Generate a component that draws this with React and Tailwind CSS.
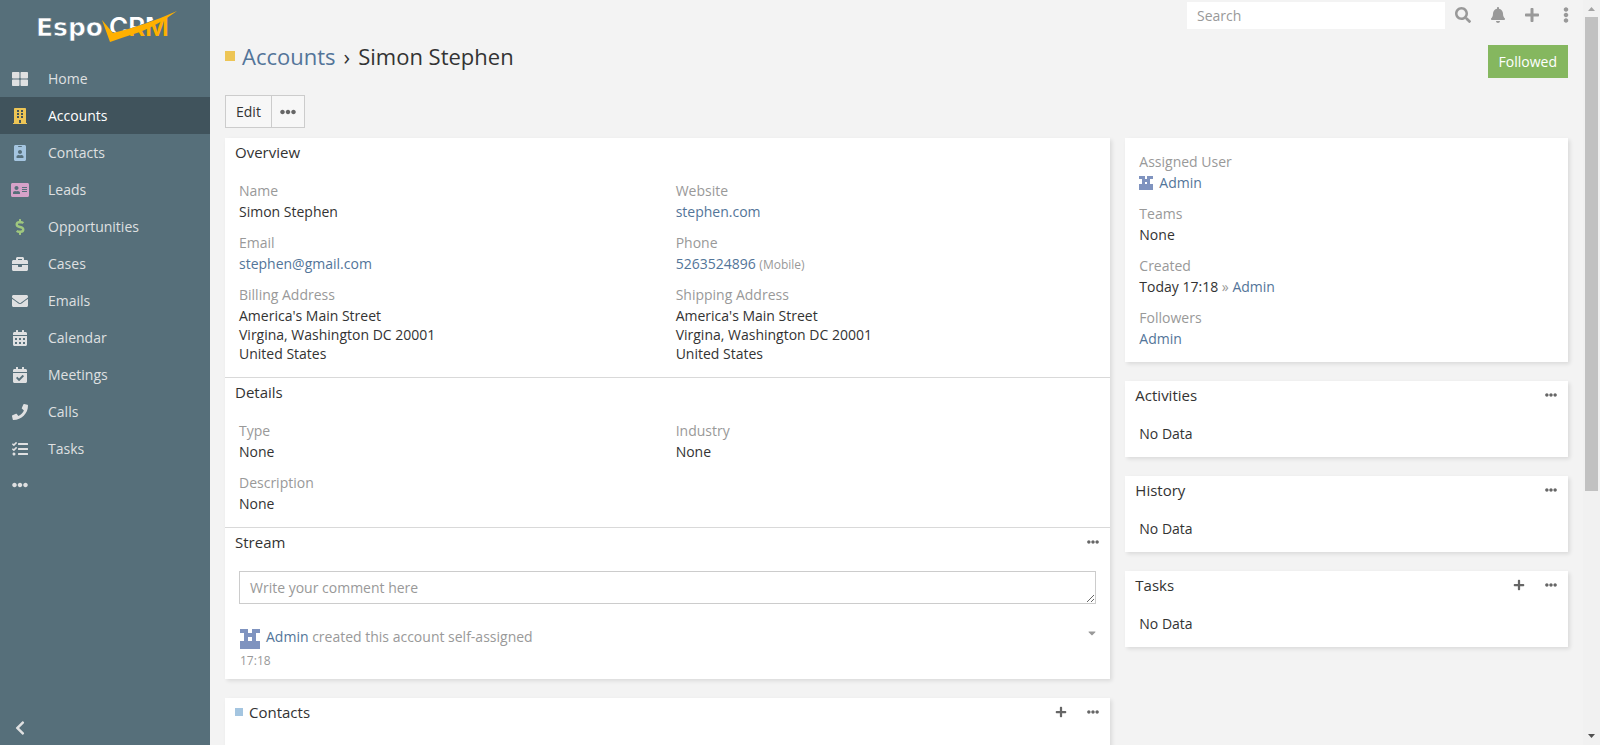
import React from "react";
import {
  FaThLarge,
  FaBuilding,
  FaIdBadge,
  FaAddressCard,
  FaDollarSign,
  FaBriefcase,
  FaEnvelope,
  FaCalendarAlt,
  FaCalendarCheck,
  FaPhone,
  FaTasks,
  FaEllipsisH,
  FaEllipsisV,
  FaChevronLeft,
  FaSearch,
  FaBell,
  FaPlus,
  FaCaretDown,
} from "react-icons/fa";

const NAV = [
  { label: "Home", Icon: FaThLarge },
  { label: "Accounts", Icon: FaBuilding, color: "text-[#edc555]", active: true },
  { label: "Contacts", Icon: FaIdBadge, color: "text-[#a4c5e0]" },
  { label: "Leads", Icon: FaAddressCard, color: "text-[#d6a2c9]" },
  { label: "Opportunities", Icon: FaDollarSign, color: "text-[#9fc77e]" },
  { label: "Cases", Icon: FaBriefcase },
  { label: "Emails", Icon: FaEnvelope },
  { label: "Calendar", Icon: FaCalendarAlt },
  { label: "Meetings", Icon: FaCalendarCheck },
  { label: "Calls", Icon: FaPhone },
  { label: "Tasks", Icon: FaTasks },
];

const ADDRESS = ["America's Main Street", "Virgina, Washington DC 20001", "United States"];

function Logo() {
  return (
    <svg viewBox="0 0 150 45" className="h-[45px] w-[150px]" role="img" aria-label="EspoCRM">
      <defs>
        <clipPath id="above">
          <path d="M76 0 H150 V4 Q116 19 86 28 L80 26 Z" />
        </clipPath>
        <clipPath id="below">
          <path d="M150 6 Q110 21 81 34 V45 H150 Z" />
        </clipPath>
      </defs>
      <text
        x="6"
        y="31"
        fill="#fff"
        stroke="#566f7a"
        strokeWidth="0.6"
        fontFamily="DejaVu Sans"
        fontWeight="700"
        fontSize="25"
      >
        Espo
      </text>
      <g fontFamily="Inter" fontWeight="600" fontSize="26">
        <text x="79" y="31" fill="#fff" clipPath="url(#above)">
          CRM
        </text>
        <text x="79" y="31" fill="#ffb000" clipPath="url(#below)">
          CRM
        </text>
      </g>
      <path d="M72 15 L83 28 Q116 20 147 6 Q128 20 110 27 Q94 32 80 37 Z" fill="#ffb000" />
    </svg>
  );
}

function Avatar({ className }) {
  return (
    <svg viewBox="0 0 5 5" className={className} shapeRendering="crispEdges" aria-hidden="true">
      <path d="M0 0H2V1H3V0H5V1H4V3H5V5H0V3H1V1H0Z M2 2V3H3V2Z" fill="#7f93bf" fillRule="evenodd" />
    </svg>
  );
}

function Link({ children }) {
  return (
    <a href="#" className="text-[#537599]">
      {children}
    </a>
  );
}

function Field({ label, children }) {
  return (
    <div>
      <dt className="mb-0.5 text-[#999]">{label}</dt>
      <dd>{children}</dd>
    </div>
  );
}

function PanelHeader({ title, swatch, add, menu }) {
  return (
    <div className="flex h-7 items-center px-2.5">
      {swatch && <span className="mr-1.5 size-2 bg-[#a4c5e0]" />}
      <h4 className="flex-1 text-[15px]">{title}</h4>
      {add && (
        <button type="button" aria-label={`Create in ${title}`} className="mr-5 text-[#666]">
          <FaPlus className="size-3" />
        </button>
      )}
      {menu && (
        <button type="button" aria-label={`${title} menu`} className="mr-px text-[#666]">
          <FaEllipsisH className="size-3" />
        </button>
      )}
    </div>
  );
}

function Card({ children }) {
  return <section className="bg-white shadow-[2px_2px_4px_rgba(0,0,0,0.1)]">{children}</section>;
}

function EmptyCard({ title, add }) {
  return (
    <Card>
      <PanelHeader title={title} add={add} menu />
      <p className="px-3.5 pt-[15px] pb-3.5">No Data</p>
    </Card>
  );
}

function Sidebar() {
  return (
    <aside className="flex w-[210px] shrink-0 flex-col bg-[#566f7a] text-[#dfe0e1]">
      <a href="#" className="flex h-[60px] justify-center pt-[5px]">
        <Logo />
      </a>
      <nav>
        <ul>
          {NAV.map(({ label, Icon, color, active }) => (
            <li key={label}>
              <a
                href="#"
                className={`flex h-[37px] items-center gap-[19px] pl-[11px] ${active ? "bg-[#40535c] text-white" : ""}`}
              >
                <Icon className={`h-4 w-[18px] ${color || ""}`} />
                {label}
              </a>
            </li>
          ))}
        </ul>
        <button type="button" aria-label="More" className="flex h-9 items-center pl-[11px]">
          <FaEllipsisH className="h-4 w-[18px]" />
        </button>
      </nav>
      <button type="button" aria-label="Collapse menu" className="mt-auto flex h-[34px] items-center pl-[11px]">
        <FaChevronLeft className="h-4 w-[18px]" />
      </button>
    </aside>
  );
}

function TopBar() {
  return (
    <div className="flex h-[30px] items-center justify-end text-[#999]">
      <input
        type="search"
        aria-label="Search"
        placeholder="Search"
        className="h-[27px] w-[258px] bg-white px-2.5 text-[#333] outline-none placeholder:text-[#999]"
      />
      <button type="button" aria-label="Run search" className="ml-2.5">
        <FaSearch className="size-4" />
      </button>
      <button type="button" aria-label="Notifications" className="ml-[19px]">
        <FaBell className="size-4" />
      </button>
      <button type="button" aria-label="Quick create" className="ml-[18px]">
        <FaPlus className="size-4" />
      </button>
      <button type="button" aria-label="Menu" className="-mr-1.5 ml-[18px]">
        <FaEllipsisV className="size-4" />
      </button>
    </div>
  );
}

function Scrollbar() {
  return (
    <div className="flex w-[17px] shrink-0 flex-col bg-[#f1f1f1]" aria-hidden="true">
      <svg viewBox="0 0 17 17" className="size-[17px]">
        <path d="M5 11L8.500 7L12 11Z" fill="#a3a3a3" />
      </svg>
      <div className="flex-1 px-0.5">
        <div className="h-2/3 bg-[#c1c1c1]" />
      </div>
      <svg viewBox="0 0 17 17" className="size-[17px]">
        <path d="M5 6L8.500 10L12 6Z" fill="#505050" />
      </svg>
    </div>
  );
}

export default function App() {
  return (
    <div className="flex h-screen overflow-hidden bg-[#f3f3f3] font-['Open_Sans',sans-serif] text-[14px] leading-[19px] text-[#333]">
      <Sidebar />
      <main className="min-w-0 flex-1 px-[15px]">
        <TopBar />
        <header className="mt-[15px] mb-[17px] flex h-[33px] items-start justify-between">
          <h3 className="flex items-center text-[22px] leading-[22px]">
            <span className="mr-[7px] size-2.5 bg-[#edc555]" />
            <Link>Accounts</Link>
            <span className="mx-2">›</span>
            <span>Simon Stephen</span>
          </h3>
          <button type="button" className="h-[33px] bg-[#85b75f] px-[11px] text-white">
            Followed
          </button>
        </header>
        <div className="mb-2.5 flex h-[33px]">
          <button type="button" className="border border-[#ccc] bg-[#f7f7f7] px-2.5">
            Edit
          </button>
          <button
            type="button"
            aria-label="More actions"
            className="-ml-px border border-[#ccc] bg-[#f7f7f7] px-2 text-[#666]"
          >
            <FaEllipsisH className="size-4" />
          </button>
        </div>
        <div className="grid grid-cols-[2fr_1fr] items-start gap-[15px]">
          <div className="space-y-[19px]">
            <Card>
              <PanelHeader title="Overview" />
              <dl className="grid grid-cols-2 gap-x-4 gap-y-3 px-3.5 pt-[15px] pb-3.5">
                <Field label="Name">Simon Stephen</Field>
                <Field label="Website">
                  <Link>stephen.com</Link>
                </Field>
                <Field label="Email">
                  <Link>stephen@gmail.com</Link>
                </Field>
                <Field label="Phone">
                  <Link>5263524896</Link> <span className="text-xs text-[#999]">(Mobile)</span>
                </Field>
                <Field label="Billing Address">
                  {ADDRESS.map((line) => (
                    <div key={line}>{line}</div>
                  ))}
                </Field>
                <Field label="Shipping Address">
                  {ADDRESS.map((line) => (
                    <div key={line}>{line}</div>
                  ))}
                </Field>
              </dl>
              <div className="border-t border-[#d9d9d9]">
                <PanelHeader title="Details" />
                <dl className="grid grid-cols-2 gap-x-4 gap-y-3 px-3.5 pt-[15px] pb-3.5">
                  <Field label="Type">None</Field>
                  <Field label="Industry">None</Field>
                  <Field label="Description">None</Field>
                </dl>
              </div>
              <div className="border-t border-[#d9d9d9]">
                <PanelHeader title="Stream" menu />
                <div className="px-3.5 pt-[15px] pb-[9px]">
                  <textarea
                    rows={1}
                    aria-label="Comment"
                    placeholder="Write your comment here"
                    className="block h-[33px] w-full resize-y border border-[#ccc] px-2.5 py-1.5 outline-none placeholder:text-[#999]"
                  />
                  <div className="mt-[23px] flex items-start pl-px text-[#999]">
                    <Avatar className="mt-0.5 mr-1.5 size-5" />
                    <p className="flex-1">
                      <Link>Admin</Link> created this account self-assigned
                    </p>
                    <button type="button" aria-label="Note actions">
                      <FaCaretDown className="h-3 w-2" />
                    </button>
                  </div>
                  <p className="mt-0.5 pl-px text-xs leading-[19px] text-[#999]">17:18</p>
                </div>
              </div>
            </Card>
            <Card>
              <PanelHeader title="Contacts" swatch add menu />
              <div className="h-12" />
            </Card>
          </div>
          <div className="space-y-[19px]">
            <Card>
              <dl className="space-y-3 p-3.5">
                <Field label="Assigned User">
                  <span className="flex items-center gap-1.5">
                    <Avatar className="size-3.5" />
                    <Link>Admin</Link>
                  </span>
                </Field>
                <Field label="Teams">None</Field>
                <Field label="Created">
                  Today 17:18 <span className="text-[#999]">»</span> <Link>Admin</Link>
                </Field>
                <Field label="Followers">
                  <Link>Admin</Link>
                </Field>
              </dl>
            </Card>
            <EmptyCard title="Activities" />
            <EmptyCard title="History" />
            <EmptyCard title="Tasks" add />
          </div>
        </div>
      </main>
      <Scrollbar />
    </div>
  );
}
